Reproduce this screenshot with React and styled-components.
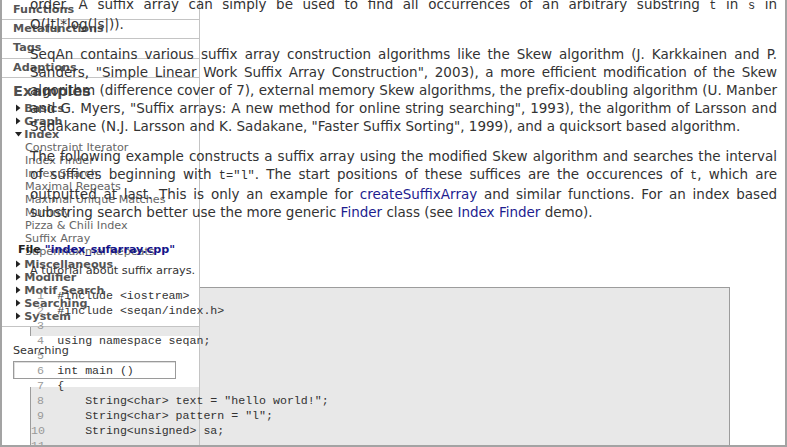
import React from 'react';
import styled, { createGlobalStyle } from 'styled-components';

const Global = createGlobalStyle`
  html, body { margin: 0; padding: 0; background: #fff; }
  body { font-family: "DejaVu Sans", Verdana, sans-serif; }
`;

const Frame = styled.div`
  box-sizing: border-box;
  width: 787px;
  height: 447px;
  border: 2px solid #a3a3a3;
  border-top: none;
  overflow: hidden;
  background: #fff;
  color: #333;
`;

/* Sidebar: a float whose margin box has no width, so the page text runs over it */
const Sidebar = styled.aside`
  float: left;
  box-sizing: border-box;
  width: 198px;
  height: 100%;
  margin-right: -198px;
  border-right: 1px solid #c4c4c4;
  font-size: 11.2px;
`;

const NavPanel = styled.nav`
  background: #fff;
  padding: 0.75px 0 3.7px;
  border-bottom: 1px solid #c4c4c4;
`;

const NavRow = styled.div`
  height: 18.25px;
  line-height: 18.25px;
  border-bottom: 1px solid #c4c4c4;
  padding-left: 11px;
  font-weight: bold;
  color: #555;
`;

const SectionTitle = styled.div`
  margin: 3.75px 0 2.3px;
  padding-left: 11px;
  font-size: 14.5px;
  line-height: 18px;
  font-weight: bold;
  color: #505050;
`;

const TreeItem = styled.div`
  display: flex;
  align-items: center;
  height: 13px;
  line-height: 13px;
  white-space: nowrap;
  padding-left: ${p => (p.$sub ? '23px' : '12.5px')};
  font-weight: ${p => (p.$sub ? 'normal' : 'bold')};
  color: ${p => (p.$sub ? '#666' : '#555')};
`;

const Twisty = styled.svg`
  flex: none;
  width: 7px;
  height: 8px;
  margin-right: 2.8px;
`;

const SearchPanel = styled.div`
  margin-top: 8.6px;
  background: #fff;
  padding: 8px 0 8px 11px;
`;

const SearchLabel = styled.div`
  font-size: 11.2px;
  line-height: 14px;
  color: #333;
`;

const SearchInput = styled.input`
  display: block;
  box-sizing: border-box;
  margin-top: 3px;
  width: 163px;
  height: 18px;
  padding: 0;
  border: 1px solid #9a9a9a;
  box-shadow: inset 1px 1px 0 #dedede;
  background: #fff;
  outline: none;
`;

const Article = styled.main`
  padding: 0 8px 0 28px;
  font-size: 13.5px;
  line-height: 18px;
  color: #333;
`;

const Para = styled.p`
  margin: 0 0 12px;
  text-align: justify;
  &:first-child {
    margin: -5px 0 12px;
    text-align-last: justify;
  }
`;

const Code = styled.code`
  font-family: "Liberation Mono", "Courier New", monospace;
  font-size: 12px;
  color: #333;
`;

const Link = styled.a`
  color: #1d1d8f;
  text-decoration: none;
`;

const FileTitle = styled.h3`
  margin: 20px 0 0 -12px;
  font-size: 11.2px;
  line-height: 18px;
  font-weight: bold;
  color: #222;
`;

const FileName = styled.span`
  color: #14148a;
`;

const Summary = styled.div`
  margin-top: 3.2px;
  font-size: 11.3px;
  line-height: 18px;
`;

const CodeBox = styled.div`
  box-sizing: border-box;
  width: 700px;
  margin-top: 6.4px;
  padding-top: 0.5px;
  border: 1px solid #9c9c9c;
  background: #e8e8e8;
  font-family: "Liberation Mono", "Courier New", monospace;
  font-size: 11.6px;
  line-height: 15px;
  color: #333;
  white-space: pre;
`;

const CodeLine = styled.div``;

const LineNo = styled.span`
  display: inline-block;
  width: 13px;
  margin-right: 13.3px;
  text-align: right;
  color: #999;
`;

const Right = () => (
  <Twisty viewBox="0 0 7 8"><path d="M1 0.5 L5.5 4 L1 7.5 Z" fill="#222" /></Twisty>
);
const Down = () => (
  <Twisty viewBox="0 0 7 8"><path d="M0 2 L7 2 L3.5 6.5 Z" fill="#222" /></Twisty>
);

const topRows = ['Functions', 'Metafunctions', 'Tags', 'Adaptions'];
const indexDemos = [
  'Constraint Iterator',
  'Index Finder',
  'Index Search',
  'Maximal Repeats',
  'Maximal Unique Matches',
  'Mummy',
  'Pizza & Chili Index',
  'Suffix Array',
  'Supermaximal Repeats',
];
const afterGroups = ['Miscellaneous', 'Modifier', 'Motif Search', 'Searching', 'System'];

const codeLines = [
  '#include <iostream>',
  '#include <seqan/index.h>',
  '',
  'using namespace seqan;',
  '',
  'int main ()',
  '{',
  '    String<char> text = "hello world!";',
  '    String<char> pattern = "l";',
  '    String<unsigned> sa;',
  '',
];

export default function App() {
  return (
    <>
      <Global />
      <Frame>
        <Sidebar>
          <NavPanel>
            {topRows.map(r => <NavRow key={r}>{r}</NavRow>)}
            <SectionTitle>Examples</SectionTitle>
            <TreeItem><Right />Basics</TreeItem>
            <TreeItem><Right />Graph</TreeItem>
            <TreeItem><Down />Index</TreeItem>
            {indexDemos.map(d => <TreeItem $sub key={d}>{d}</TreeItem>)}
            {afterGroups.map(g => <TreeItem key={g}><Right />{g}</TreeItem>)}
          </NavPanel>
          <SearchPanel>
            <SearchLabel>Searching</SearchLabel>
            <SearchInput type="text" readOnly />
          </SearchPanel>
        </Sidebar>
        <Article>
          <Para>
            order. A suffix array can simply be used to find all occurrences of an arbitrary substring <Code>t</Code> in <Code>s</Code> in<br />O(|t|*log(|s|)).
          </Para>
          <Para>
            SeqAn contains various suffix array construction algorithms like the Skew algorithm (J. Karkkainen and P. Sanders, "Simple Linear Work Suffix Array Construction", 2003), a more efficient modification of the Skew algorithm (difference cover of 7), external memory Skew algorithms, the prefix-doubling algorithm (U. Manber and G. Myers, "Suffix arrays: A new method for online string searching", 1993), the algorithm of Larsson and Sadakane (N.J. Larsson and K. Sadakane, "Faster Suffix Sorting", 1999), and a quicksort based algorithm.
          </Para>
          <Para>
            The following example constructs a suffix array using the modified Skew algorithm and searches the interval of suffices beginning with <Code>t="l"</Code>. The start positions of these suffices are the occurences of <Code>t</Code>, which are outputted at last. This is only an example for <Link>createSuffixArray</Link> and similar functions. For an index based substring search better use the more generic <Link>Finder</Link> class (see <Link>Index Finder</Link> demo).
          </Para>
          <FileTitle>File <FileName>"index_sufarray.cpp"</FileName></FileTitle>
          <Summary>A tutorial about suffix arrays.</Summary>
          <CodeBox>
            {codeLines.map((l, i) => (
              <CodeLine key={i}><LineNo>{i + 1}</LineNo>{l}</CodeLine>
            ))}
          </CodeBox>
        </Article>
      </Frame>
    </>
  );
}
